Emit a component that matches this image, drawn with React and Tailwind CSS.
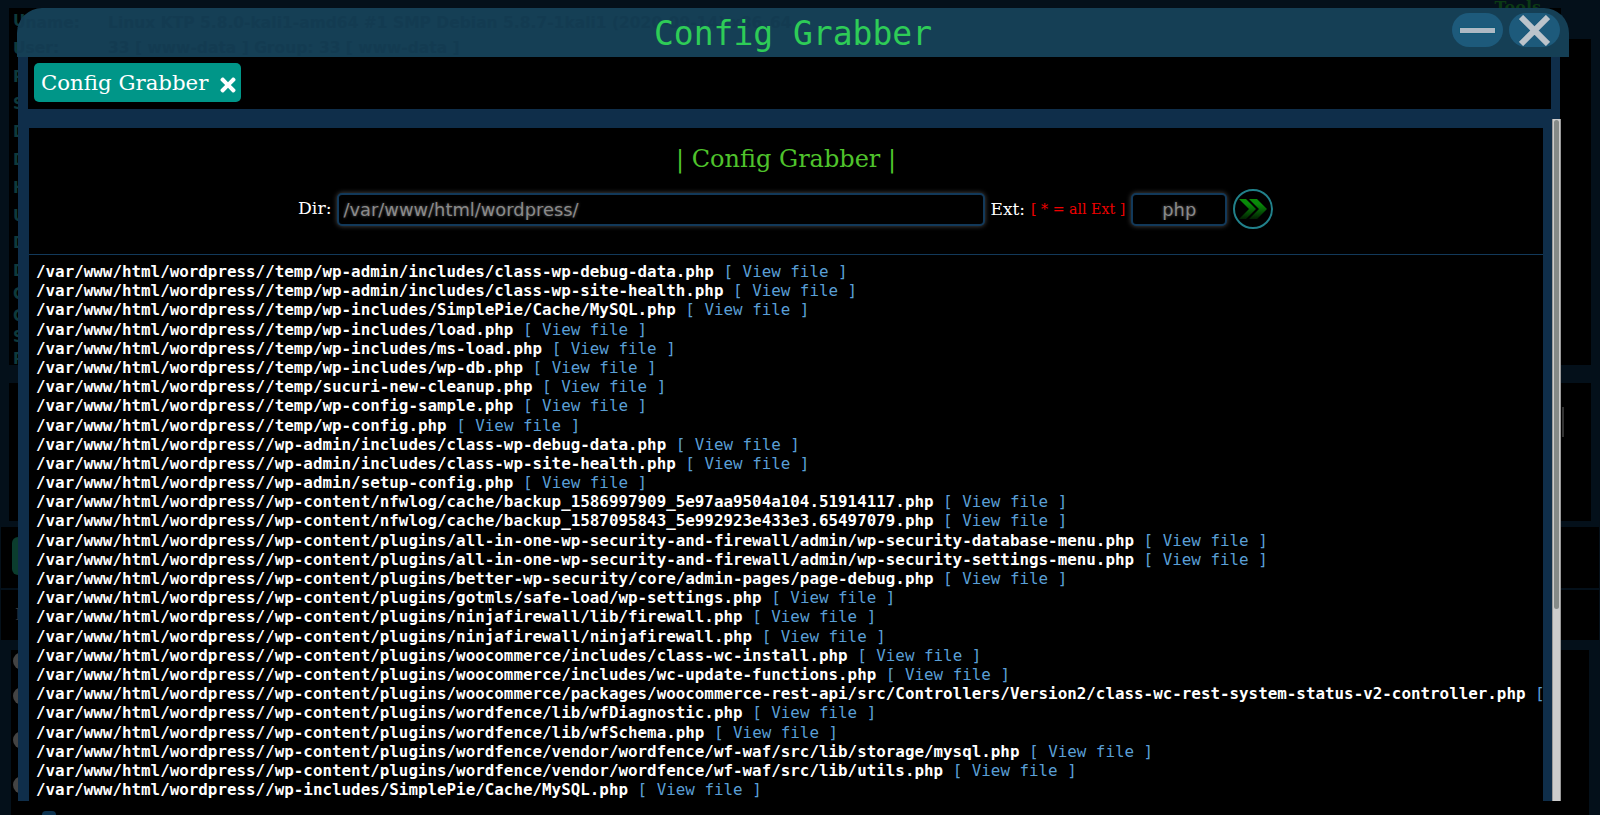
import React from "react";
import { FaTimes } from "react-icons/fa";

const base = "/var/www/html/wordpress//";
const files = [
  "temp/wp-admin/includes/class-wp-debug-data.php",
  "temp/wp-admin/includes/class-wp-site-health.php",
  "temp/wp-includes/SimplePie/Cache/MySQL.php",
  "temp/wp-includes/load.php",
  "temp/wp-includes/ms-load.php",
  "temp/wp-includes/wp-db.php",
  "temp/sucuri-new-cleanup.php",
  "temp/wp-config-sample.php",
  "temp/wp-config.php",
  "wp-admin/includes/class-wp-debug-data.php",
  "wp-admin/includes/class-wp-site-health.php",
  "wp-admin/setup-config.php",
  "wp-content/nfwlog/cache/backup_1586997909_5e97aa9504a104.51914117.php",
  "wp-content/nfwlog/cache/backup_1587095843_5e992923e433e3.65497079.php",
  "wp-content/plugins/all-in-one-wp-security-and-firewall/admin/wp-security-database-menu.php",
  "wp-content/plugins/all-in-one-wp-security-and-firewall/admin/wp-security-settings-menu.php",
  "wp-content/plugins/better-wp-security/core/admin-pages/page-debug.php",
  "wp-content/plugins/gotmls/safe-load/wp-settings.php",
  "wp-content/plugins/ninjafirewall/lib/firewall.php",
  "wp-content/plugins/ninjafirewall/ninjafirewall.php",
  "wp-content/plugins/woocommerce/includes/class-wc-install.php",
  "wp-content/plugins/woocommerce/includes/wc-update-functions.php",
  "wp-content/plugins/woocommerce/packages/woocommerce-rest-api/src/Controllers/Version2/class-wc-rest-system-status-v2-controller.php",
  "wp-content/plugins/wordfence/lib/wfDiagnostic.php",
  "wp-content/plugins/wordfence/lib/wfSchema.php",
  "wp-content/plugins/wordfence/vendor/wordfence/wf-waf/src/lib/storage/mysql.php",
  "wp-content/plugins/wordfence/vendor/wordfence/wf-waf/src/lib/utils.php",
  "wp-includes/SimplePie/Cache/MySQL.php",
  "wp-includes/class-wp-site-health.php",
];

const infoTop = ["Uname:", "User:", "Php:", "Safe Mode:", "Disabled:", "Downloaders:", "HDD:", "Useful:", "Domains:", "Database:"];
const infoBottom = ["Curl:", "Cwd:", "Server IP:", "Read:"];

function Background() {
  return (
    <div className="h-[815px] w-[1600px] overflow-hidden bg-[#04101a] px-[9px]">
      <div className="flex h-[8px] justify-end pr-[50px] font-['DejaVu_Serif',serif] text-[16px] font-bold leading-[16px] text-[#0b3a14]">
        Tools
      </div>
      <div className="flex h-[357px]">
        <div className="flex-1 bg-black pl-[4px] font-['DejaVu_Sans',sans-serif] text-[15px] font-bold text-[#0e3a3c]">
          {infoTop.map((t) => (
            <div key={t} className="h-[27.8px] leading-[27.8px]">{t}</div>
          ))}
          <div className="-mt-[2px]">
            {infoBottom.map((t) => (
              <div key={t} className="h-[21.7px] leading-[21.7px]">{t}</div>
            ))}
          </div>
        </div>
        <div className="mt-[31px] w-[30px] bg-black" />
      </div>
      <div className="mt-[18px] flex h-[138px] justify-end bg-black pr-[27px] pt-[24px]">
        <div className="h-[30px] w-[2px] bg-[#333]" />
      </div>
      <div className="-mx-[8px] mt-[6px] h-[61px] bg-black pl-[11px] pt-[10px]">
        <div className="h-[38px] w-[30px] rounded-[6px] bg-[#0b3d2e]" />
      </div>
      <div className="-mx-[8px] mt-[2px] h-[50px] bg-black pl-[14px] pt-[15px] font-['DejaVu_Serif',serif] text-[16px] leading-[20px] text-[#333]">
        I
      </div>
      <div className="ml-[2px] mr-[2px] mt-[10px] flex h-[165px] flex-col bg-black pl-[2px]">
        {[2, 17, 26, 27].map((m, i) => (
          <div key={i} className="h-[18px] w-[18px] shrink-0 rounded-full bg-[#444]" style={{ marginTop: m }} />
        ))}
        <div className="ml-[29px] mt-[17px] h-[6px] w-[14px] shrink-0 rounded-t-[4px] bg-[#0d3350]" />
      </div>
    </div>
  );
}

function Glow({ className, value }) {
  return (
    <input
      readOnly
      value={value}
      className={
        "h-[33px] rounded-[5px] border-2 border-[#12395a] bg-black font-['DejaVu_Sans',sans-serif] text-[17.85px] text-[#8a8a8a] shadow-[0_0_5px_rgba(255,255,255,0.3)] outline-none [text-shadow:0_0_3px_rgba(255,255,255,0.35)] " +
        className
      }
    />
  );
}

function Window() {
  return (
    <div className="absolute left-[17px] top-[8px] flex h-[793px] w-[1552px] flex-col">
      <div className="relative h-[49px] shrink-0 overflow-hidden rounded-t-[25px] bg-[#153f55]">
        <div className="absolute left-[-4px] top-[4px] flex font-['DejaVu_Sans',sans-serif] text-[15.5px] font-bold leading-[22px] text-[#133b51]">
          <span className="w-[95px]">Uname:</span>
          <span>Linux KTP 5.8.0-kali1-amd64 #1 SMP Debian 5.8.7-1kali1 (2020-09-14) x86_64</span>
        </div>
        <div className="absolute left-[-4px] top-[29px] flex font-['DejaVu_Sans',sans-serif] text-[15.5px] font-bold leading-[22px] text-[#133b51]">
          <span className="w-[95px]">User:</span>
          <span>33 [ www-data ] Group: 33 [ www-data ]</span>
        </div>
        <div className="relative flex h-full items-center justify-center pt-[2px] font-['DejaVu_Sans_Mono',monospace] text-[33px] leading-[47px] text-[#2ecc57]">
          Config Grabber
        </div>
        <div className="absolute right-[9px] top-[5px] flex gap-[6px]">
          <div className="flex h-[34px] w-[51px] items-center justify-center rounded-full bg-[#1d5a7b]">
            <div className="h-[7px] w-[37px] border border-[#135a78] bg-[#aeb9c4]" />
          </div>
          <div className="flex h-[34px] w-[51px] items-center justify-center rounded-full bg-[#1d5a7b]">
            <svg width="31" height="31" viewBox="0 0 31 31">
              <path d="M2 2 L29 29 M29 2 L2 29" stroke="#bcc4cb" strokeWidth="6" fill="none" />
            </svg>
          </div>
        </div>
      </div>

      <div className="relative ml-[1px] mr-[9px] flex min-h-0 flex-1 flex-col bg-[#0f2e4a] pr-[9px]">
        <div className="ml-[10px] flex h-[52px] shrink-0 items-start bg-black pl-[6px] pt-[6px]">
          <div className="flex h-[39px] w-[207px] items-center rounded-[5px] bg-[#009688] pl-[7px] font-['DejaVu_Serif',serif] text-[21.3px] leading-none text-white">
            <span>Config Grabber</span>
            <FaTimes className="ml-[9px] mt-[5px] text-[22px] text-white" />
          </div>
        </div>
        <div className="ml-[11px] mr-[8px] mt-[19px] flex min-h-0 flex-1 flex-col overflow-hidden bg-black">
          <div className="flex h-[127px] shrink-0 flex-col items-center border-b border-[#12395a] font-['DejaVu_Serif',serif]">
            <div className="mt-[16px] text-[24px] leading-[30px] text-[#4fc32c]">| Config Grabber |</div>
            <div className="mt-[15px] flex h-[40px] w-full items-center pl-[269px]">
              <span className="text-[17.3px] leading-none text-white">Dir:</span>
              <Glow className="ml-[6px] w-[648px] pl-[4px]" value="/var/www/html/wordpress/" />
              <span className="ml-[5px] text-[17px] leading-none text-white">Ext:</span>
              <span className="ml-[6px] text-[14.2px] leading-none text-[#f00000]">[ * = all Ext ]</span>
              <Glow className="ml-[6px] w-[96px] text-center" value="php" />
              <button className="ml-[6px] flex h-[40px] w-[40px] items-center justify-center rounded-full border-2 border-[#21808a]">
                <svg width="30" height="20" viewBox="0 0 30 20">
                  <defs>
                    <linearGradient id="chev" x1="0" y1="0" x2="0" y2="1">
                      <stop offset="0.25" stopColor="#098a09" />
                      <stop offset="1" stopColor="#012001" />
                    </linearGradient>
                  </defs>
                  <path d="M1 0 H8 L18 10 L8 20 H1 L11 10 Z" fill="url(#chev)" />
                  <path d="M11 0 H19 L29 10 L19 20 H11 L21 10 Z" fill="url(#chev)" />
                </svg>
              </button>
            </div>
          </div>
          <div className="overflow-hidden whitespace-nowrap pl-[7px] pt-[7px] font-['DejaVu_Sans_Mono',monospace] text-[15.87px] leading-[19.2px]">
            {files.map((f) => (
              <div key={f} className="h-[19.2px]">
                <span className="font-bold text-white">{base + f}</span>{" "}
                <span className="text-[#5a9fd6]">[ View file ]</span>
              </div>
            ))}
          </div>
        </div>
        <div className="absolute bottom-0 right-[-1px] top-[62px] w-[9px] border-x border-[#999] bg-[#cccccc]">
          <div className="mx-auto mt-[1px] h-[489px] w-[5px] rounded-full bg-[#858a88]" />
        </div>
      </div>
    </div>
  );
}

export default function App() {
  return (
    <div className="relative h-[815px] w-[1600px] overflow-hidden">
      <Background />
      <Window />
    </div>
  );
}
